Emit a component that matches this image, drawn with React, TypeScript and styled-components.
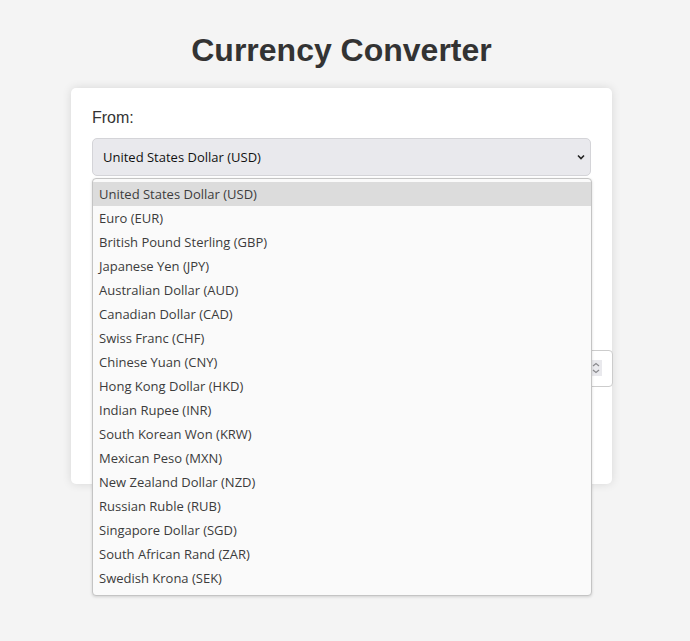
import React from "react";
import styled, { createGlobalStyle } from "styled-components";

const GlobalStyle = createGlobalStyle`
  html, body { margin: 0; padding: 0; }
  body {
    background: #f4f4f4;
    font-family: "Liberation Sans", Arial, sans-serif;
    color: #333;
  }
`;

const Page = styled.div`
  padding: 32px 7px 0 0;
  display: flex;
  flex-direction: column;
  align-items: center;
  min-height: 641px;
  box-sizing: border-box;
`;

const Title = styled.h1`
  margin: 0 0 19px;
  font-size: 32px;
  font-weight: bold;
  color: #333;
  line-height: 37px;
`;

const Card = styled.div`
  width: 541px;
  box-sizing: border-box;
  background: #fff;
  border-radius: 5px;
  box-shadow: 0 0 10px rgba(0, 0, 0, 0.12);
  padding: 20px 21px 20px 21px;
`;

const Group = styled.div<{ $mb: number }>`
  margin-bottom: ${(p) => p.$mb}px;
  position: relative;
`;

const Label = styled.label`
  display: block;
  font-size: 16px;
  line-height: 20px;
  margin-bottom: 10px;
  color: #333;
`;

const SelectBox = styled.div`
  position: relative;
  width: 499px;
  height: 38px;
  box-sizing: border-box;
  border: 1px solid #d4d4d8;
  border-radius: 5px;
  background: #e9e9ed;
  display: flex;
  align-items: center;
  padding: 0 10px;
  font-family: "Open Sans", "Noto Sans", sans-serif;
  font-size: 13px;
  color: #111;
`;

const SelectText = styled.span`
  flex: 1;
`;

const Chevron = styled.svg`
  width: 8px;
  height: 8px;
  margin-right: -5px;
`;

const Dropdown = styled.ul`
  position: absolute;
  top: calc(100% + 3px);
  left: -1px;
  width: 500px;
  box-sizing: border-box;
  margin: 0;
  padding: 3px 0 5px;
  list-style: none;
  background: #fafafa;
  border: 1px solid #c4c4c4;
  border-radius: 4px;
  box-shadow: 0 1px 3px rgba(0, 0, 0, 0.15);
  z-index: 10;
  font-family: "Open Sans", "Noto Sans", sans-serif;
  font-size: 13px;
  color: #3c3c3c;
`;

const Option = styled.li<{ $active?: boolean }>`
  height: 24px;
  line-height: 25px;
  padding-left: 6px;
  background: ${(p) => (p.$active ? "#dcdcdc" : "transparent")};
`;

const InputWrap = styled.div`
  position: relative;
  width: 521px;
  height: 37px;
`;

const Input = styled.input`
  width: 100%;
  height: 100%;
  box-sizing: border-box;
  padding: 10px;
  border: 1px solid #ccc;
  border-radius: 4px;
  font-size: 13px;
  font-family: "Liberation Sans", Arial, sans-serif;
  background: #fff;
`;

const Spinner = styled.div`
  position: absolute;
  right: 11px;
  top: 10px;
  width: 12px;
  height: 16px;
  background: #e9e9ed;
  display: flex;
  align-items: center;
  justify-content: center;
`;

const Button = styled.button`
  display: block;
  width: 100%;
  height: 40px;
  margin-top: 20px;
  border: none;
  border-radius: 5px;
  background: #fff;
  color: #fff;
  font-size: 16px;
  font-family: "Liberation Sans", Arial, sans-serif;
`;

const Result = styled.div`
  height: 17px;
  font-size: 16px;
`;

const currencies = [
  "United States Dollar (USD)",
  "Euro (EUR)",
  "British Pound Sterling (GBP)",
  "Japanese Yen (JPY)",
  "Australian Dollar (AUD)",
  "Canadian Dollar (CAD)",
  "Swiss Franc (CHF)",
  "Chinese Yuan (CNY)",
  "Hong Kong Dollar (HKD)",
  "Indian Rupee (INR)",
  "South Korean Won (KRW)",
  "Mexican Peso (MXN)",
  "New Zealand Dollar (NZD)",
  "Russian Ruble (RUB)",
  "Singapore Dollar (SGD)",
  "South African Rand (ZAR)",
  "Swedish Krona (SEK)",
];

const ChevronIcon = () => (
  <Chevron viewBox="0 0 8 8">
    <path d="M1 2.5 L4 5.5 L7 2.5" fill="none" stroke="#222" strokeWidth="1.6" />
  </Chevron>
);

export default function App() {
  return (
    <>
      <GlobalStyle />
      <Page>
        <Title>Currency Converter</Title>
        <Card>
          <Group $mb={38}>
            <Label>From:</Label>
            <SelectBox>
              <SelectText>United States Dollar (USD)</SelectText>
              <ChevronIcon />
              <Dropdown>
                {currencies.map((c, i) => (
                  <Option key={c} $active={i === 0}>
                    {c}
                  </Option>
                ))}
              </Dropdown>
            </SelectBox>
          </Group>
          <Group $mb={38}>
            <Label>To:</Label>
            <SelectBox>
              <SelectText>Euro (EUR)</SelectText>
              <ChevronIcon />
            </SelectBox>
          </Group>
          <Group $mb={0}>
            <Label>Amount:</Label>
            <InputWrap>
              <Input defaultValue="1" />
              <Spinner>
                <svg width="8" height="12" viewBox="0 0 8 12">
                  <path d="M1 4 L4 1.5 L7 4 M1 8 L4 10.5 L7 8" fill="none" stroke="#8a8a8e" strokeWidth="1.2" />
                </svg>
              </Spinner>
            </InputWrap>
          </Group>
          <Button aria-label="Convert" />
          <Result />
        </Card>
      </Page>
    </>
  );
}
